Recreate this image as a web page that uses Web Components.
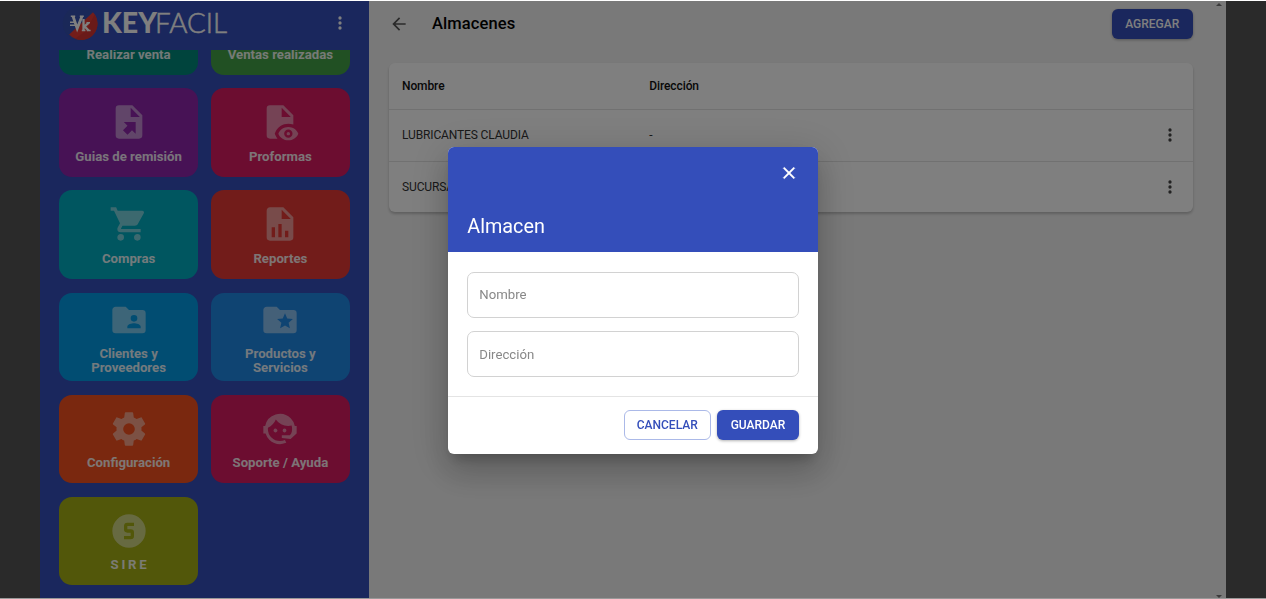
<!DOCTYPE html>
<html lang="es"><head><meta charset="utf-8"><title>KeyFacil - Almacenes</title>
<style>html,body{margin:0;height:100%;overflow:hidden;background:#fff;font-family:Roboto,sans-serif}</style></head>
<body><key-app></key-app>
<script>
const define=(name,html,setup)=>customElements.define(name,class extends HTMLElement{
 connectedCallback(){ if(this.shadowRoot)return; this.attachShadow({mode:'open'}).innerHTML=html; if(setup)setup(this,this.shadowRoot);}
});
const icons={
 guide:'<path fill-rule="evenodd" d="M14 2H6a2 2 0 0 0-2 2v16a2 2 0 0 0 2 2h12a2 2 0 0 0 2-2V8l-6-6M13 3.5L18.5 9H13V3.5M16 12V19.1L13.8 16.9 11.1 19.6 8.4 16.9 11.1 14.2 8.9 12z"/>',
 preview:'<path d="M17 18c.56 0 1 .44 1 1s-.44 1-1 1-1-.44-1-1 .44-1 1-1m0-3c-2.73 0-5.06 1.66-6 4 .94 2.34 3.27 4 6 4s5.06-1.66 6-4c-.94-2.34-3.27-4-6-4m0 6.5a2.5 2.5 0 0 1 0-5 2.5 2.5 0 0 1 0 5M9.27 20l-.42-1 .42-1C10.5 14.97 13.55 13 17 13c1.06 0 2.07.21 3 .56V8l-6-6H6a2 2 0 0 0-2 2v16a2 2 0 0 0 2 2h4.5c-.5-.6-.92-1.27-1.23-2M13 3.5L18.5 9H13V3.5z"/>',
 cart:'<path d="M17 18a2 2 0 0 1 2 2 2 2 0 0 1-2 2 2 2 0 0 1-2-2c0-1.11.89-2 2-2M1 2h3.27l.94 2H20a1 1 0 0 1 1 1c0 .17-.05.34-.12.5l-3.58 6.47c-.34.61-1 1.03-1.75 1.03H8.1l-.9 1.63-.03.12a.25.25 0 0 0 .25.25H19v2H7a2 2 0 0 1-2-2c0-.35.09-.68.24-.96l1.36-2.45L3 4H1V2m6 16a2 2 0 0 1 2 2 2 2 0 0 1-2 2 2 2 0 0 1-2-2c0-1.11.89-2 2-2z"/>',
 report:'<path d="M13 9h5.5L13 3.5V9M6 2h8l6 6v12a2 2 0 0 1-2 2H6a2 2 0 0 1-2-2V4c0-1.11.89-2 2-2m1 18h2v-6H7v6m4 0h2v-8h-2v8m4 0h2v-4h-2v4z"/>',
 people:'<path d="M19 17h-8v-1c0-1.33 2.67-2 4-2s4 .67 4 2m-4-7a2 2 0 0 1 2 2 2 2 0 0 1-2 2 2 2 0 0 1-2-2 2 2 0 0 1 2-2m5-3h-8l-2-2H4c-1.11 0-2 .89-2 2v12a2 2 0 0 0 2 2h16a2 2 0 0 0 2-2V8a2 2 0 0 0-2-2z"/>',
 star:'<path d="M17.94 17L15 15.28 12.06 17l.78-3.33-2.59-2.24 3.41-.29L15 8l1.34 3.14 3.41.29-2.59 2.24M20 6h-8l-2-2H4c-1.11 0-2 .89-2 2v12a2 2 0 0 0 2 2h16a2 2 0 0 0 2-2V8a2 2 0 0 0-2-2z"/>',
 cog:'<path d="M12 15.5A3.5 3.5 0 0 1 8.5 12 3.5 3.5 0 0 1 12 8.5a3.5 3.5 0 0 1 3.5 3.5 3.5 3.5 0 0 1-3.5 3.5m7.43-2.53c.04-.32.07-.64.07-.97s-.03-.66-.07-1l2.11-1.63c.19-.15.24-.42.12-.64l-2-3.46c-.12-.22-.39-.31-.61-.22l-2.49 1c-.52-.39-1.06-.73-1.69-.98l-.37-2.65A.506.506 0 0 0 14 2h-4c-.25 0-.46.18-.5.42l-.37 2.65c-.63.25-1.17.59-1.69.98l-2.49-1c-.22-.09-.49 0-.61.22l-2 3.46c-.13.22-.07.49.12.64L4.57 11c-.04.34-.07.67-.07 1s.03.65.07.97l-2.11 1.66c-.19.15-.25.42-.12.64l2 3.46c.12.22.39.3.61.22l2.49-1.01c.52.4 1.06.74 1.69.99l.37 2.65c.04.24.25.42.5.42h4c.25 0 .46-.18.5-.42l.37-2.65c.63-.26 1.17-.59 1.69-.99l2.49 1.01c.22.08.49 0 .61-.22l2-3.46c.12-.22.07-.49-.12-.64z"/>',
 agent:'<path d="M18.72 14.76c.35-.85.54-1.76.54-2.76 0-.72-.11-1.41-.3-2.05-.65.15-1.33.23-2.04.23A9.07 9.07 0 0 1 9.5 6.34a9.21 9.21 0 0 1-4.73 4.88c-.04.25-.04.52-.04.78A7.27 7.27 0 0 0 12 19.27c1.05 0 2.06-.23 2.97-.64.57 1.09.83 1.63.81 1.63-1.64.55-2.91.82-3.78.82-2.42 0-4.73-.95-6.43-2.66a9.03 9.03 0 0 1-2.24-3.69H2v-4.55h1.09a9.09 9.09 0 0 1 15.33-4.6 8.99 8.99 0 0 1 2.47 4.6H22v4.55h-.06L18.38 18l-5.3-.6v-1.67h4.83l.81-.97m-9.45-2.99c.3 0 .59.12.8.34a1.136 1.136 0 0 1 0 1.6 1.14 1.14 0 0 1-1.61 0 1.14 1.14 0 0 1 .81-1.94m5.45 0c.63 0 1.13.51 1.13 1.14s-.5 1.13-1.13 1.13-1.14-.5-1.14-1.13a1.14 1.14 0 0 1 1.14-1.14z"/>',
 sire:'<path d="M11 7a2 2 0 0 0-2 2v2a2 2 0 0 0 2 2h2v2H9v2h4a2 2 0 0 0 2-2v-2a2 2 0 0 0-2-2h-2V9h4V7h-4m1-5a10 10 0 1 1 0 20 10 10 0 0 1 0-20z"/>',
 dots:'<path d="M12 16a2 2 0 1 1 0 4 2 2 0 0 1 0-4m0-6a2 2 0 1 1 0 4 2 2 0 0 1 0-4m0-6a2 2 0 1 1 0 4 2 2 0 0 1 0-4z"/>',
 back:'<path d="M20 11H7.83l5.59-5.59L12 4l-8 8 8 8 1.41-1.41L7.83 13H20v-2z"/>',
 close:'<path d="M19 6.41L17.59 5 12 10.59 6.41 5 5 6.41 10.59 12 5 17.59 6.41 19 12 13.41 17.59 19 19 17.59 13.41 12z"/>'
};
define('key-icon','<style>:host{display:block;width:var(--size,20px);height:var(--size,20px);flex:none}svg{display:block;width:100%;height:100%;fill:currentColor;stroke:currentColor;stroke-width:var(--weight,0)}</style><svg viewBox="0 0 24 24"></svg>',
 (h,r)=>r.querySelector('svg').innerHTML=icons[h.getAttribute('name')]);
define('key-logo',`<style>:host{display:block}svg{display:block}</style>
<svg width="166" height="36" viewBox="62 5 166 36">
 <circle cx="80" cy="23.5" r="17.3" fill="#3550b0"/>
 <path d="M93 12.2A16.2 16.2 0 0 1 69.2 34.6z" fill="#e63b34"/>
 <path d="M94.5 14.5A16.2 16.2 0 0 1 75 38.8L86 31z" fill="#d43432"/>
 <g fill="none" stroke="#fff"><path d="M73 16.2L77.2 28.5L82 16.2" stroke-width="2.8"/><path d="M70.8 16.2h4.4M79.8 16.2h4" stroke-width="1.6"/><path d="M70 22.2h5M70 25.3h6" stroke-width="1.6"/><path d="M83.5 19V30.5M88.6 22.8L84.5 26.3L88.6 30.5" stroke-width="2.3"/><path d="M81.8 30.4h3.6M86.5 22.7h3.5M86.8 30.4h3.8" stroke-width="1.5"/></g>
 <text x="102" y="33.4" font-family="Lato" font-weight="900" font-size="28" fill="#fff" textLength="55" lengthAdjust="spacingAndGlyphs">KEY</text>
 <text x="155" y="33.4" font-family="Lato" font-weight="300" font-size="28" fill="#fff" stroke="#fff" stroke-width=".5" textLength="72" lengthAdjust="spacingAndGlyphs">FACIL</text>
</svg>`);
define('key-tile',`<style>:host{display:flex;flex-direction:column;align-items:center;box-sizing:border-box;height:88.7px;border-radius:13px;padding-top:14px;background:var(--bg);color:#fff;--size:40px}
key-icon{opacity:.47;margin-top:var(--lift,0)}
b{display:block;width:116px;text-align:center;font-size:13.2px;font-weight:700;line-height:13.2px;margin-top:7.3px;opacity:.9;letter-spacing:var(--track,0);text-indent:var(--track,0)}</style><key-icon></key-icon><b><slot></slot></b>`,
 (h,r)=>{const i=document.createElement('key-icon');i.setAttribute('name',h.getAttribute('icon'));r.querySelector('key-icon').replaceWith(i)});
define('key-sidebar',`<style>:host{display:flex;flex-direction:column;width:329px;background:#344eba;overflow:hidden}
header{height:49px;flex:none;display:flex;align-items:flex-start;box-sizing:border-box;padding:4px 19.5px 0 22px;justify-content:space-between;color:#fff}
header key-icon{margin-top:8px}
section{flex:1;min-height:0;overflow:hidden;padding:0 19.3px}
.grid{display:grid;grid-template-columns:138.6px 138.6px;column-gap:13.2px;row-gap:13.4px;margin-top:-63.7px}
.two{--lift:-6.5px}.sire{--track:2.7px}</style>
<header><key-logo></key-logo><key-icon name="dots"></key-icon></header>
<section><div class="grid">
<key-tile icon="cart" style="--bg:#00897b">Realizar venta</key-tile><key-tile icon="report" style="--bg:#43a047">Ventas realizadas</key-tile>
<key-tile icon="guide" style="--bg:#8e24aa">Guias de remisión</key-tile><key-tile icon="preview" style="--bg:#d81b60">Proformas</key-tile>
<key-tile icon="cart" style="--bg:#00acc1">Compras</key-tile><key-tile icon="report" style="--bg:#e53935">Reportes</key-tile>
<key-tile class="two" icon="people" style="--bg:#039be5">Clientes y Proveedores</key-tile><key-tile class="two" icon="star" style="--bg:#1e88e5">Productos y Servicios</key-tile>
<key-tile icon="cog" style="--bg:#f4511e">Configuración</key-tile><key-tile icon="agent" style="--bg:#d81b60">Soporte / Ayuda</key-tile>
<key-tile class="sire" icon="sire" style="--bg:#a4ae14">SIRE</key-tile></div></section>`);
define('key-button',`<style>:host{display:flex;align-items:center;justify-content:center;box-sizing:border-box;height:30px;border-radius:6px;font-size:12px;font-weight:500;background:#344eba;color:#fff;box-shadow:0 1px 3px rgba(0,0,0,.3)}
:host([outlined]){background:#fff;color:#344eba;border:1px solid #abb9e8;box-shadow:none}</style><slot></slot>`);
define('key-row',`<style>:host{display:grid;grid-template-columns:247.3px 1fr 20px;align-items:center;box-sizing:border-box;padding:0 12.5px 0 13px;height:51.7px;border-top:1px solid #e2e2e2;font-size:12px;color:#333;letter-spacing:-.13px}
:host([head]){height:46px;border-top:0;font-weight:500;color:#111;letter-spacing:-.1px}key-icon{color:#444}:host([head]) key-icon{display:none}</style><slot name="name"></slot><slot name="address"></slot><key-icon name="dots"></key-icon>`);
define('key-main',`<style>:host{display:flex;flex:1;background:#f3f3f3}
.page{flex:1;padding:0 20px}
header{display:flex;align-items:center;height:45px}
h1{font-size:16.5px;font-weight:500;margin:0 auto 0 23px;color:#000;letter-spacing:.1px}
key-icon{color:#555}key-button{width:80.5px}
.card{margin-top:17px;background:#fff;border-radius:6px;box-shadow:0 2px 3px rgba(0,0,0,.22);overflow:hidden}
.bar{width:13.5px;display:flex;flex-direction:column;justify-content:space-between;align-items:center;padding:2px 0 0}
.bar i{border:3px solid transparent;border-bottom-color:#777;border-top:0}.bar i+i{border-top:3px solid #777;border-bottom:0}</style>
<div class="page"><header><key-icon name="back"></key-icon><h1>Almacenes</h1><key-button>AGREGAR</key-button></header>
<div class="card"><key-row head><span slot="name">Nombre</span><span slot="address">Dirección</span></key-row>
<key-row><span slot="name">LUBRICANTES CLAUDIA</span><span slot="address">-</span></key-row>
<key-row><span slot="name">SUCURSAL</span><span slot="address"></span></key-row></div></div>
<div class="bar"><i></i><i></i></div>`);
define('key-field',`<style>:host{display:flex;align-items:center;height:46.4px;box-sizing:border-box;border:1px solid #d2d2d2;border-radius:7px;padding:0 11px;font-size:13.2px;color:#888}</style><slot></slot>`);
define('key-dialog',`<style>:host{display:flex;flex-direction:column;width:370.5px;height:306.5px;border-radius:6px;overflow:hidden;background:#fff;box-shadow:0 9px 12px -5px rgba(0,0,0,.2),0 19px 31px 2px rgba(0,0,0,.14),0 7px 38px 7px rgba(0,0,0,.12)}
header{height:105.3px;box-sizing:border-box;background:#344eba;color:#fff;padding:16px 19.5px 11.5px;display:flex;flex-direction:column;justify-content:space-between}
key-icon{align-self:flex-end;--weight:.5}h2{font-size:19.8px;line-height:28px;font-weight:400;margin:0}
.body{display:flex;flex-direction:column;gap:13px;padding:19.4px 19.5px 0;height:145.5px;box-sizing:border-box;border-bottom:1px solid #e4e4e4}
footer{display:flex;justify-content:flex-end;gap:6.5px;padding:13.3px 19.5px}</style>
<header><key-icon name="close"></key-icon><h2>Almacen</h2></header>
<div class="body"><key-field>Nombre</key-field><key-field>Dirección</key-field></div>
<footer><key-button outlined style="width:87px">CANCELAR</key-button><key-button style="width:81.5px">GUARDAR</key-button></footer>`);
define('key-app',`<style>:host{display:block;height:599px;box-sizing:border-box;padding:1px 0;background:linear-gradient(#fff 1px,#999 1px)}
.shell{display:flex;height:597px;padding:0 40px;background:#545454;box-sizing:border-box}
.shade{position:fixed;inset:1px 0;background:rgba(0,0,0,.5);display:flex;align-items:center;justify-content:center;padding-top:2px;box-sizing:border-box}</style>
<div class="shell"><key-sidebar></key-sidebar><key-main></key-main></div><div class="shade"><key-dialog></key-dialog></div>`);
</script></body></html>
